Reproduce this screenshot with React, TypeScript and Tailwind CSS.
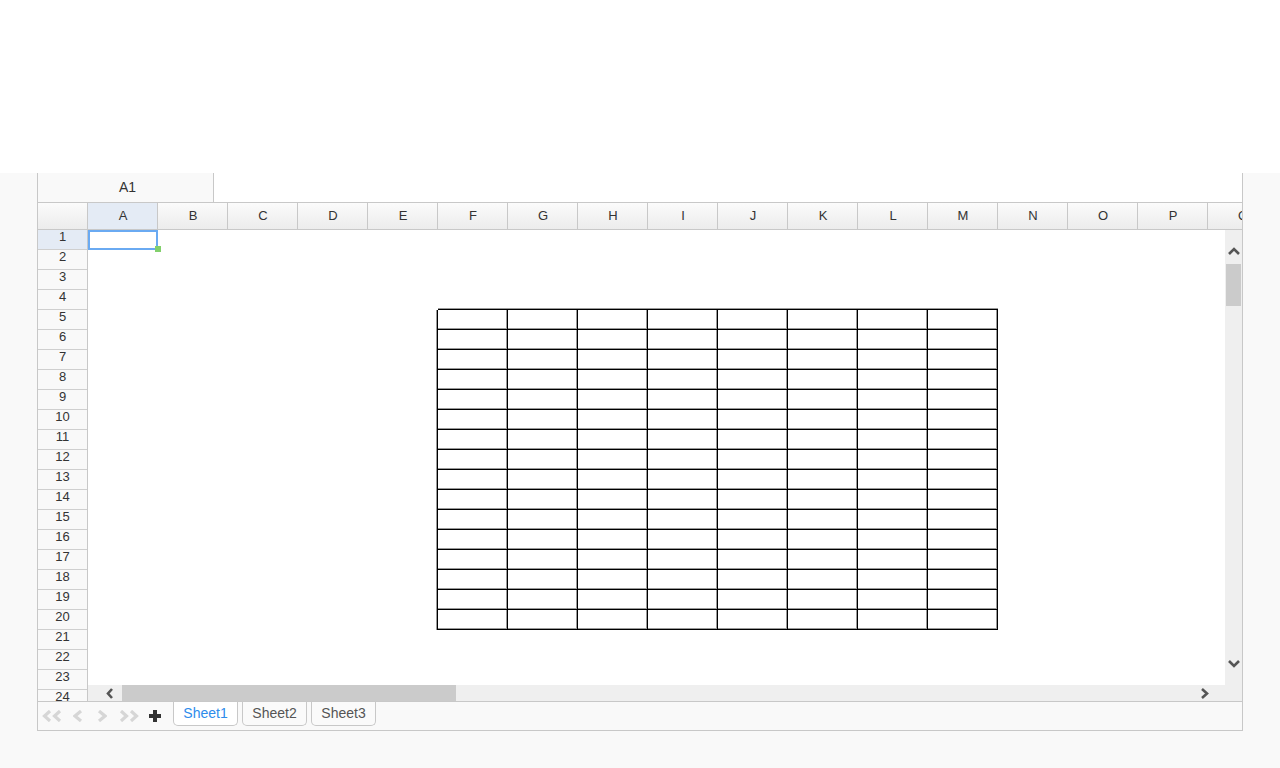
import React from 'react';

const COLS = 'ABCDEFGHIJKLMNOPQ'.split('');
const ROWS = Array.from({ length: 24 }, (_, i) => i + 1);

// the bordered block sits on F5:M20
function cellClass(ci: number, r: number) {
  const inTable = ci >= 5 && ci <= 12 && r >= 5 && r <= 20;
  const right = inTable || (ci === 4 && r >= 5 && r <= 20);
  const bottom = inTable || (r === 4 && ci >= 5 && ci <= 12);
  let shadow = '';
  if (right && bottom) shadow = 'shadow-[inset_-1px_-1px_0_#999]';
  else if (right) shadow = 'shadow-[inset_-1px_0_0_#999]';
  else if (bottom) shadow = 'shadow-[inset_0_-1px_0_#999]';
  return [
    'relative h-[20px] w-[70px] shrink-0',
    right ? 'border-r border-r-black' : '',
    bottom ? 'border-b border-b-black' : '',
    shadow,
  ].join(' ');
}

function Chevron({ dir, color, w = 10, h = 12, sw = 3 }: { dir: 'l' | 'r' | 'u' | 'd'; color: string; w?: number; h?: number; sw?: number }) {
  const pts = {
    l: `${w - 2},1 2,${h / 2} ${w - 2},${h - 1}`,
    r: `2,1 ${w - 2},${h / 2} 2,${h - 1}`,
    u: `1,${h - 2} ${w / 2},2 ${w - 1},${h - 2}`,
    d: `1,2 ${w / 2},${h - 2} ${w - 1},2`,
  }[dir];
  return (
    <svg width={w} height={h} viewBox={`0 0 ${w} ${h}`} className="block">
      <polyline points={pts} fill="none" stroke={color} strokeWidth={sw} strokeLinejoin="miter" />
    </svg>
  );
}

function DoubleChevron({ dir, color }: { dir: 'l' | 'r'; color: string }) {
  const pts =
    dir === 'l'
      ? ['8,1 2.5,6 8,11', '18,1 12.5,6 18,11']
      : ['2,1 7.5,6 2,11', '12,1 17.5,6 12,11'];
  return (
    <svg width={20} height={12} viewBox="0 0 20 12" className="block">
      {pts.map((p) => (
        <polyline key={p} points={p} fill="none" stroke={color} strokeWidth={3.2} />
      ))}
    </svg>
  );
}

export default function App() {
  return (
    <div className="min-h-screen bg-[#f9f9f9] font-['Liberation_Sans',Arial,sans-serif] text-[#333]">
      <div className="h-[173px] bg-white" />
      <div className="pl-[37px]">
        <div className="w-[1206px] border-x border-b border-[#c8c8c8]">
          {/* name box row */}
          <div className="flex h-[30px] border-b border-[#c8c8c8]">
            <div className="flex w-[176px] items-center justify-center border-r border-[#c8c8c8] bg-[#f9f9f9] pl-[4px] text-[14px]">
              A1
            </div>
            <div className="flex-1 bg-white" />
          </div>

          {/* column headers */}
          <div className="flex h-[27px] overflow-hidden border-b border-[#c8c8c8] bg-gradient-to-b from-[#fbfbfb] to-[#ececec]">
            <div className="w-[50px] shrink-0 border-r border-[#c8c8c8]" />
            {COLS.map((c, i) => (
              <div
                key={c}
                className={
                  'flex w-[70px] shrink-0 items-center justify-center border-r border-[#c8c8c8] pl-[1px] text-[13px] ' +
                  (i === 0 ? 'bg-[#e4ebf5]' : '')
                }
              >
                {c}
              </div>
            ))}
          </div>

          {/* body */}
          <div className="flex h-[471px]">
            <div className="w-[50px] shrink-0 overflow-hidden border-r border-[#c8c8c8] bg-[#f9f9f9]">
              {ROWS.map((r) => (
                <div
                  key={r}
                  className={
                    'flex h-[20px] items-center justify-center border-b border-[#cfcfcf] pb-[6px] text-[13px] ' +
                    (r === 1 ? 'bg-[#e4ebf5]' : '')
                  }
                >
                  {r}
                </div>
              ))}
            </div>

            <div className="flex min-w-0 flex-1 flex-col">
              <div className="flex-1 overflow-hidden bg-white">
                {ROWS.map((r) => (
                  <div key={r} className="flex">
                    {COLS.map((c, ci) => (
                      <div key={c} className={cellClass(ci, r)}>
                        {ci === 0 && r === 1 && (
                          <>
                            <div className="absolute inset-0 border-2 border-[#6aaaf2]" />
                            <div className="absolute right-[-3px] bottom-[-2px] h-[6px] w-[6px] bg-[#82d06c]" />
                          </>
                        )}
                      </div>
                    ))}
                  </div>
                ))}
              </div>
              {/* horizontal scrollbar */}
              <div className="flex h-[16px] items-stretch bg-[#efefef]">
                <div className="flex w-[34px] items-center justify-end pr-[8px]">
                  <Chevron dir="l" color="#555" w={8} h={11} sw={2.6} />
                </div>
                <div className="w-[334px] bg-[#cbcbcb]" />
                <div className="ml-auto mr-[16px] flex items-center">
                  <Chevron dir="r" color="#555" w={9} h={11} sw={2.6} />
                </div>
              </div>
            </div>

            {/* vertical scrollbar */}
            <div className="flex w-[17px] shrink-0 flex-col items-center bg-[#efefef]">
              <div className="mt-[17px]">
                <Chevron dir="u" color="#555" w={12} h={9} sw={2.6} />
              </div>
              <div className="mt-[8px] h-[42px] w-[15px] bg-[#cbcbcb]" />
              <div className="mt-[353px]">
                <Chevron dir="d" color="#555" w={12} h={9} sw={2.6} />
              </div>
            </div>
          </div>

          {/* sheet tabs */}
          <div className="flex h-[29px] border-t border-[#c8c8c8] bg-[#f9f9f9] pl-[4px]">
            <div className="flex items-center self-center">
              <DoubleChevron dir="l" color="#d6d6d6" />
              <div className="ml-[11px]">
                <Chevron dir="l" color="#d6d6d6" w={10} h={12} sw={3.2} />
              </div>
              <div className="ml-[14px]">
                <Chevron dir="r" color="#d6d6d6" w={10} h={12} sw={3.2} />
              </div>
              <div className="ml-[12px]">
                <DoubleChevron dir="r" color="#d6d6d6" />
              </div>
              <svg width={12} height={12} viewBox="0 0 12 12" className="ml-[10px] block">
                <rect x="4" y="0" width="4" height="12" fill="#333" />
                <rect x="0" y="4" width="12" height="4" fill="#333" />
              </svg>
            </div>
            <div className="ml-[12px] flex gap-[4px]">
              {['Sheet1', 'Sheet2', 'Sheet3'].map((s, i) => (
                <div
                  key={s}
                  className={
                    'flex h-[24px] w-[65px] items-center justify-center rounded-b-[5px] border-x border-b border-[#c8c8c8] text-[14px] ' +
                    (i === 0 ? 'bg-white text-[#2d8ceb]' : 'bg-[#fafafa] text-[#555]')
                  }
                >
                  {s}
                </div>
              ))}
            </div>
          </div>
        </div>
      </div>
    </div>
  );
}
